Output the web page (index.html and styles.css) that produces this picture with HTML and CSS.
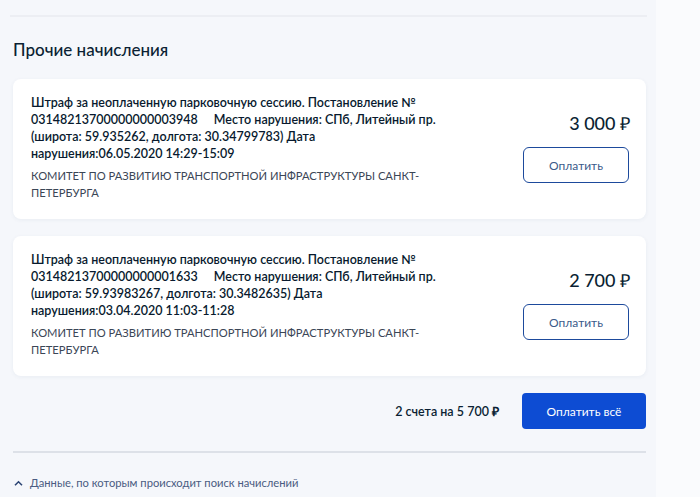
FILE: index.html
```html
<!DOCTYPE html>
<html lang="ru">
<head>
    <meta charset="UTF-8">
    <title>Прочие начисления</title>
    <link rel="stylesheet" href="styles.css">
</head>
<body>
    <div class="page">
        <div class="top-line"></div>
        <h2 class="title">Прочие начисления</h2>

        <div class="card">
            <div class="info">
                <div class="desc">Штраф за неоплаченную парковочную сессию. Постановление № <span class="num">03148213700000000003948</span>Место нарушения: СПб, Литейный пр. (широта: 59.935262, долгота: 30.34799783) Дата <span class="date">нарушения:06.05.2020 14:29-15:09</span></div>
                <div class="org">КОМИТЕТ ПО РАЗВИТИЮ ТРАНСПОРТНОЙ ИНФРАСТРУКТУРЫ САНКТ-ПЕТЕРБУРГА</div>
            </div>
            <div class="pay">
                <div class="sum">3 000 ₽</div>
                <button class="btn-outline">Оплатить</button>
            </div>
        </div>

        <div class="card">
            <div class="info">
                <div class="desc">Штраф за неоплаченную парковочную сессию. Постановление № <span class="num">03148213700000000001633</span>Место нарушения: СПб, Литейный пр. (широта: 59.93983267, долгота: 30.3482635) Дата <span class="date">нарушения:03.04.2020 11:03-11:28</span></div>
                <div class="org">КОМИТЕТ ПО РАЗВИТИЮ ТРАНСПОРТНОЙ ИНФРАСТРУКТУРЫ САНКТ-ПЕТЕРБУРГА</div>
            </div>
            <div class="pay">
                <div class="sum">2 700 ₽</div>
                <button class="btn-outline">Оплатить</button>
            </div>
        </div>

        <div class="total">
            <span class="total-text">2 счета на 5 700 ₽</span>
            <button class="btn-primary">Оплатить всё</button>
        </div>

        <div class="bottom-line"></div>

        <a class="search-link" href="#">
            <svg width="9" height="7" viewBox="0 0 9 7"><path d="M1 5.2 L4.5 1.8 L8 5.2" fill="none" stroke="#2d4675" stroke-width="1.6"/></svg>
            Данные, по которым происходит поиск начислений
        </a>
    </div>
</body>
</html>
```

FILE: styles.css
```css
body {
    margin: 0;
    background-color: #fafbfd;
    font-family: "Lato", "Liberation Sans", sans-serif;
    color: #0b1f33;
}
.page {
    width: 633px;
    padding: 15px 10px 10px 13px;
    background-color: #f5f7fb;
    min-height: 472px;
}
.top-line {
    height: 2px;
    margin-left: -3px;
    margin-right: -1px;
    background-color: #eceef3;
}
.title {
    margin: 22px 0 18px;
    font-size: 17px;
    line-height: 22px;
    font-weight: 500;
}
.card {
    display: flex;
    justify-content: space-between;
    background-color: white;
    border-radius: 8px;
    box-shadow: 0 1px 4px rgba(40,60,100,0.06);
    padding: 15px 17px 18px 18px;
    margin-bottom: 17px;
}
.info {
    width: 445px;
}
.desc {
    font-size: 12.5px;
    line-height: 17px;
    font-weight: 600;
    color: #081a2e;
}
.num {
    margin-right: 16px;
}
.date {
    white-space: nowrap;
}
.org {
    margin-top: 5px;
    font-size: 11.2px;
    line-height: 17px;
    color: #3b4656;
}
.pay {
    display: flex;
    flex-direction: column;
    align-items: flex-end;
    padding-top: 18px;
}
.sum {
    font-size: 18px;
    line-height: 22px;
    font-weight: 500;
    margin-bottom: 13px;
    margin-right: -1px;
}
.btn-outline {
    width: 106px;
    height: 36px;
    border: 1.5px solid #1d4a9c;
    border-radius: 6px;
    background-color: white;
    color: #3b5a8a;
    font-family: "Lato", "Liberation Sans", sans-serif;
    font-size: 12px;
}
.total {
    display: flex;
    justify-content: flex-end;
    align-items: center;
    gap: 23px;
}
.total-text {
    font-size: 12.5px;
    font-weight: 600;
}
.btn-primary {
    width: 124px;
    height: 36px;
    border: none;
    border-radius: 4px;
    background-color: #0d4cd3;
    color: white;
    font-family: "Lato", "Liberation Sans", sans-serif;
    font-size: 12px;
}
.bottom-line {
    height: 2px;
    margin-top: 22px;
    background-color: #dde1e8;
}
.search-link {
    display: flex;
    align-items: center;
    gap: 7px;
    margin-top: 22px;
    padding-left: 1px;
    font-size: 11.2px;
    line-height: 16px;
    color: #4a5c82;
    text-decoration: none;
}
```
